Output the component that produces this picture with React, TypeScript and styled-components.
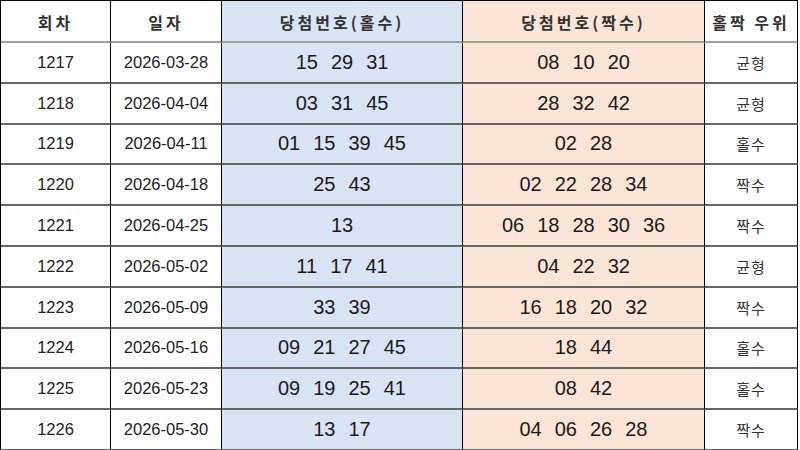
import styled, { createGlobalStyle } from "styled-components";

const GlobalStyle = createGlobalStyle`
  html, body {
    margin: 0;
    padding: 0;
    background: #ffffff;
  }
  body {
    font-family: "Liberation Sans", "Noto Sans CJK KR", Arial, sans-serif;
    color: #1f1f1f;
  }
`;

type Draw = {
  round: number;
  date: string;
  odd: string[];
  even: string[];
  result: string;
};

const draws: Draw[] = [
  { round: 1217, date: "2026-03-28", odd: ["15", "29", "31"], even: ["08", "10", "20"], result: "균형" },
  { round: 1218, date: "2026-04-04", odd: ["03", "31", "45"], even: ["28", "32", "42"], result: "균형" },
  { round: 1219, date: "2026-04-11", odd: ["01", "15", "39", "45"], even: ["02", "28"], result: "홀수" },
  { round: 1220, date: "2026-04-18", odd: ["25", "43"], even: ["02", "22", "28", "34"], result: "짝수" },
  { round: 1221, date: "2026-04-25", odd: ["13"], even: ["06", "18", "28", "30", "36"], result: "짝수" },
  { round: 1222, date: "2026-05-02", odd: ["11", "17", "41"], even: ["04", "22", "32"], result: "균형" },
  { round: 1223, date: "2026-05-09", odd: ["33", "39"], even: ["16", "18", "20", "32"], result: "짝수" },
  { round: 1224, date: "2026-05-16", odd: ["09", "21", "27", "45"], even: ["18", "44"], result: "홀수" },
  { round: 1225, date: "2026-05-23", odd: ["09", "19", "25", "41"], even: ["08", "42"], result: "홀수" },
  { round: 1226, date: "2026-05-30", odd: ["13", "17"], even: ["04", "06", "26", "28"], result: "짝수" },
];

const Sheet = styled.div`
  display: grid;
  grid-template-columns: 110px 111px 241px 242px 93px;
  grid-template-rows: 42px repeat(10, 40.8px);
  width: 798px;
  border-left: 1px solid #000;
  border-top: 1px solid #000;
  height: 450px;
  overflow: hidden;
  box-sizing: border-box;
`;

const Cell = styled.div<{ $tone?: "odd" | "even" }>`
  display: flex;
  align-items: center;
  justify-content: center;
  box-sizing: border-box;
  border-right: 1px solid #000;
  border-bottom: 2px solid #666;
  background: ${(p) =>
    p.$tone === "odd" ? "#dae3f3" : p.$tone === "even" ? "#fce4d6" : "#ffffff"};
  font-size: 16.5px;
  color: #222;
`;

const HeadCell = styled(Cell)`
  font-family: "Noto Sans CJK KR", "Liberation Sans", sans-serif;
  font-size: 16px;
  font-weight: 700;
  letter-spacing: 3px;
  color: #333;
  border-bottom: 2px solid #a0a0a0;
  padding-top: 1px;
`;

const Numbers = styled.div`
  display: flex;
  gap: 13px;
  font-size: 20px;
  color: #1a1a1a;
`;

const Label = styled.span`
  font-family: "Noto Sans CJK KR", sans-serif;
  font-size: 15px;
  letter-spacing: 1px;
  color: #333;
`;

export default function App() {
  return (
    <>
      <GlobalStyle />
      <Sheet>
        <HeadCell>회차</HeadCell>
        <HeadCell>일자</HeadCell>
        <HeadCell $tone="odd">당첨번호(홀수)</HeadCell>
        <HeadCell $tone="even">당첨번호(짝수)</HeadCell>
        <HeadCell>홀짝 우위</HeadCell>
        {draws.map((d) => (
          <Row key={d.round} draw={d} />
        ))}
      </Sheet>
    </>
  );
}

function Row({ draw }: { draw: Draw }) {
  return (
    <>
      <Cell>{draw.round}</Cell>
      <Cell>{draw.date}</Cell>
      <Cell $tone="odd">
        <Numbers>
          {draw.odd.map((n) => (
            <span key={n}>{n}</span>
          ))}
        </Numbers>
      </Cell>
      <Cell $tone="even">
        <Numbers>
          {draw.even.map((n) => (
            <span key={n}>{n}</span>
          ))}
        </Numbers>
      </Cell>
      <Cell>
        <Label>{draw.result}</Label>
      </Cell>
    </>
  );
}
